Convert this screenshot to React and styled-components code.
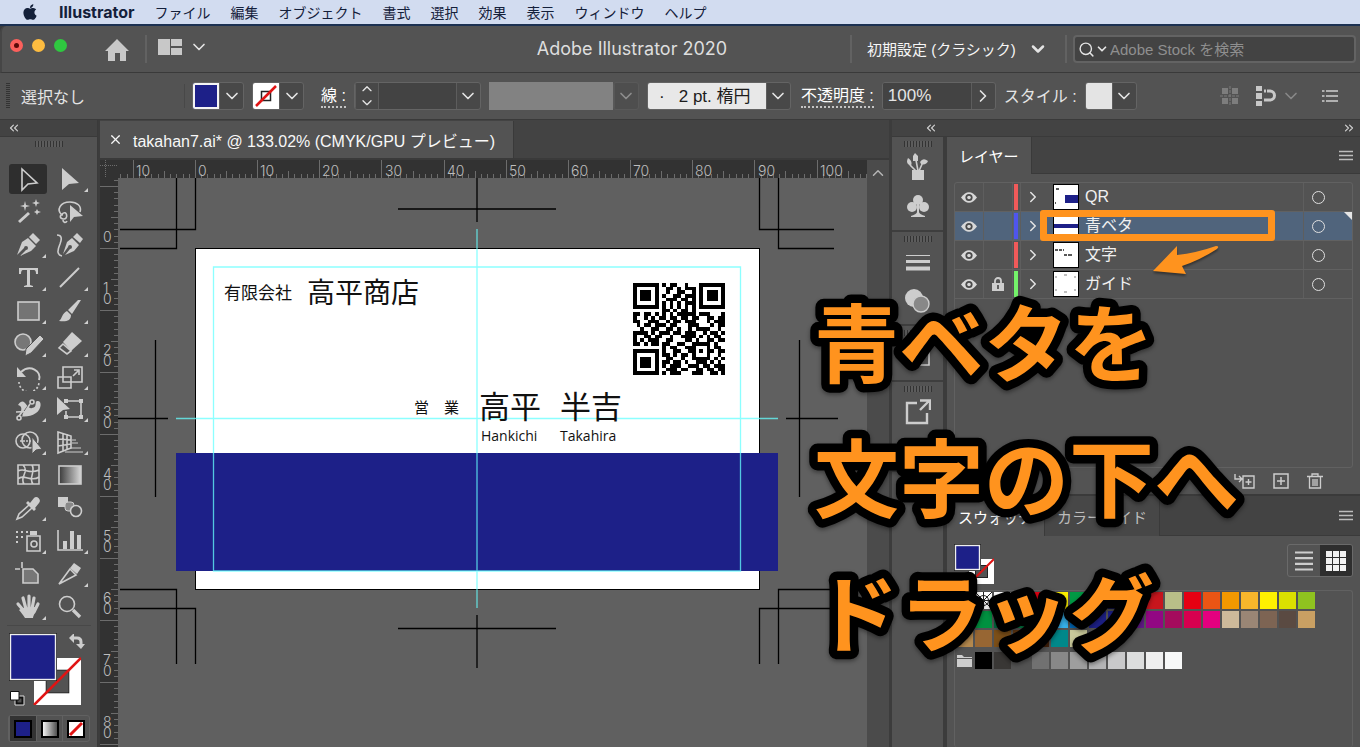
import { useState } from 'react';
import styled, { createGlobalStyle } from 'styled-components';
import {
    ChevronDown,
    ChevronUp,
    ChevronRight,
    ChevronsLeft,
    ChevronsRight,
    Search,
    X,
} from 'lucide-react';
import { FaApple } from 'react-icons/fa';

const GlobalStyle = createGlobalStyle`
    * { box-sizing: border-box; }
    body {
        margin: 0;
        background: #3c3c3c;
        color: #e4e4e4;
        font-family: "Liberation Sans", "Noto Sans CJK JP", sans-serif;
        font-size: 16px;
        overflow: hidden;
    }
    button, input, select {
        font: inherit;
        color: inherit;
        background: none;
        border: none;
        margin: 0;
        padding: 0;
        outline: none;
    }
    ul { list-style: none; margin: 0; padding: 0; }
    svg { display: block; flex: none; }
`;

const App_ = styled.div`
    height: 100vh;
    display: flex;
    flex-direction: column;
`;

/* ---------- mac menu bar ---------- */
const MenuBar = styled.nav`
    height: 26px;
    flex: none;
    display: flex;
    align-items: center;
    gap: 20px;
    padding-left: 21px;
    background: #d2dcf0;
    border-bottom: 2px solid #1c3152;
    color: #14203a;
`;
const MenuItem = styled.button`
    font-size: ${(p) => (p.$bold ? 16 : 14)}px;
    font-weight: ${(p) => (p.$bold ? 700 : 400)};
    font-family: ${(p) => (p.$bold ? 'Inter, sans-serif' : '"Noto Sans CJK JP", sans-serif')};
    line-height: 20px;
    white-space: nowrap;
`;

/* ---------- title bar ---------- */
const TitleBar = styled.header`
    height: 47px;
    flex: none;
    display: grid;
    grid-template-columns: 1fr auto 1fr;
    align-items: center;
    background: #535353;
    border-bottom: 1px solid #3a3a3a;
    border-left: 2px solid #464646;
    border-top-left-radius: 6px;
`;
const TitleSide = styled.div`
    display: flex;
    align-items: center;
    justify-content: ${(p) => p.$end ? 'flex-end' : 'flex-start'};
    padding: ${(p) => p.$end ? '0 4px 0 0' : '0 0 0 8px'};
`;
const Lights = styled.div`
    display: flex;
    gap: 9px;
    padding-bottom: 8px;
`;
const Light = styled.button`
    width: 13px;
    height: 13px;
    border-radius: 50%;
    background: ${(p) => p.$color};
    display: grid;
    place-items: center;
    &::after {
        content: '';
        width: 5px;
        height: 5px;
        border-radius: 50%;
        background: ${(p) => p.$dot || 'transparent'};
    }
`;
const HomeButton = styled.button`
    margin: 1px 16px 0 38px;
`;
const Rule = styled.span`
    width: 2px;
    height: 28px;
    flex: none;
    background: #626262;
`;
const LayoutButton = styled.button`
    display: flex;
    align-items: center;
    gap: 7px;
    margin: 0 0 4px 11px;
`;
const Title = styled.h1`
    margin: 0;
    padding-right: 98px;
    font-family: Inter, sans-serif;
    font-size: 18px;
    font-weight: 400;
    line-height: 24px;
    color: #dedede;
    white-space: nowrap;
`;
const Workspace = styled.label`
    display: flex;
    align-items: center;
    gap: 11px;
    margin: 0 17px 0 15px;
`;
const WorkspaceSelect = styled.select`
    appearance: none;
    font-size: 15px;
    width: 150px;
    color: #f6f6f6;
`;
const SearchBox = styled.label`
    display: flex;
    align-items: center;
    width: 283px;
    height: 28px;
    margin-left: 6px;
    padding-left: 3px;
    background: #434343;
    border: 2px solid #636363;
    border-radius: 4px;
    input {
        flex: 1;
        min-width: 0;
        margin-left: 1px;
        font-size: 15px;
    }
    input::placeholder { color: #8f8f8f; opacity: 1; }
`;

/* ---------- control bar ---------- */
const ControlBar = styled.div`
    height: 47px;
    flex: none;
    display: flex;
    align-items: center;
    padding: 0 22px 0 6px;
    background: #535353;
    border-bottom: 1px solid #3a3a3a;
`;
const SideGrip = styled.i`
    width: 4px;
    height: 26px;
    background: repeating-linear-gradient(#333 0 1px, #535353 1px 2px);
`;
const BarTitle = styled.span`
    width: 164px;
    margin-left: 11px;
    font-size: 16px;
    border-right: 1px solid #484848;
`;
const BarLabel = styled.label`
    margin: 0 8px 0 ${(p) => p.$space}px;
    line-height: 21px;
    font-size: 16px;
    white-space: nowrap;
    border-bottom: ${(p) => (p.$dotted ? '2px dotted #c4c4c4' : 'none')};
    color: ${(p) => (p.$dotted ? '#fff' : '#e4e4e4')};
`;
const Combo = styled.div`
    display: flex;
    height: 28px;
    margin-left: ${(p) => p.$space || 0}px;
    border: 1px solid #646464;
    border-radius: 3px;
    background: #484848;
    opacity: ${(p) => (p.$off ? 0.4 : 1)};
    overflow: hidden;
`;
const Drop = styled.button`
    width: 24px;
    display: grid;
    place-content: center;
    border-left: 1px solid #5d5d5d;
    border-right: ${(p) => (p.$first ? '1px solid #5d5d5d' : 'none')};
`;
const ComboInput = styled.input`
    width: ${(p) => p.$w}px;
    padding-left: 5px;
    background: #434343;
    font-size: 17px;
`;
const SwatchBox = styled.span`
    width: 26px;
    height: 26px;
    display: grid;
    background: ${(p) => p.$color};
    border: ${(p) => p.$edge || '0'} solid #f4f4f4;
`;
const ProfileBox = styled.span`
    width: 124px;
    height: 28px;
    margin-left: 8px;
    background: #828282;
`;
const BrushSelect = styled.select`
    appearance: none;
    width: 118px;
    padding-left: 11px;
    background: #e8e8e8;
    color: #1c1c1c;
    font-size: 17px;
`;
const BarEnd = styled.div`
    display: flex;
    align-items: center;
    margin-left: auto;
    gap: 16px;
`;
const SnapDrop = styled.button`
    margin-left: 5px;
    color: #888;
`;

/* ---------- main columns ---------- */
const Main = styled.main`
    position: relative;
    flex: 1;
    min-height: 0;
    display: flex;
    overflow: hidden;
`;
const Strip = styled.div`
    height: 17px;
    flex: none;
    display: flex;
    align-items: center;
    justify-content: space-between;
    padding: 0 4px 0 ${(p) => p.$pad}px;
    background: #434343;
    border-bottom: 1px solid #3a3a3a;
    color: #d0d0d0;
`;
const Toolbox = styled.aside`
    width: 98px;
    flex: none;
    display: flex;
    flex-direction: column;
    background: #535353;
    border-right: 1px solid #3a3a3a;
`;
const Grip = styled.i`
    width: 28px;
    height: 6px;
    flex: none;
    margin: 4px auto 0;
    background: repeating-linear-gradient(90deg, #333 0 1px, #5c5c5c 1px 3px);
`;
const ToolGrid = styled.div`
    flex: none;
    height: 460px;
    margin: 16px 7px 0;
    display: grid;
    grid-template: repeat(14, 1fr) / 42px 42px;
    place-items: center;
`;
const Tool = styled.button`
    position: relative;
    width: 38px;
    height: 30px;
    display: grid;
    place-items: center;
    border-radius: 3px;
    background: ${(p) => (p.$on ? '#2e2e2e' : 'transparent')};
    &::after {
        content: '';
        display: ${(p) => (p.$more ? 'block' : 'none')};
        position: absolute;
        right: 1px;
        bottom: 2px;
        border: 2px solid #cfcfcf;
        border-top-color: transparent;
        border-left-color: transparent;
    }
`;
const ToolRule = styled.hr`
    width: 84px;
    margin: 2px auto 7px;
    border: none;
    border-top: 1px solid #484848;
`;
const ProxyArea = styled.div`
    position: relative;
    margin-left: 9px;
    height: 73px;
    flex: none;
`;
const SwapIcon = styled.button`
    position: absolute;
    left: 60px;
    top: 1px;
`;
const DefaultIcon = styled.button`
    position: absolute;
    left: 0;
    bottom: 0;
`;
const Modes = styled.div`
    display: flex;
    margin: 9px 0 0 8px;
    width: 82px;
    border: 1px solid #616161;
    border-radius: 3px;
`;
const Mode = styled.button`
    flex: 1;
    height: 25px;
    display: grid;
    place-items: center;
    background: ${(p) => (p.$on ? '#333' : 'transparent')};
    border-left: 1px solid #616161;
`;

/* ---------- document ---------- */
const Document = styled.section`
    flex: 1;
    min-width: 0;
    margin: 0 3px 0 2px;
    display: flex;
    flex-direction: column;
    background: #434343;
`;
const TabBar = styled.div`
    height: 40px;
    flex: none;
    display: flex;
    padding-top: 1px;
    border-bottom: 2px solid #3a3a3a;
`;
const DocTab = styled.button`
    display: flex;
    align-items: center;
    gap: 10px;
    padding: 0 18px 0 8px;
    background: #535353;
    border-right: 1px solid #3a3a3a;
    font-size: 16px;
    color: #f8f8f8;
    white-space: nowrap;
`;
const Sheet = styled.div`
    flex: 1;
    min-height: 0;
    display: grid;
    grid-template: 18px 1fr / 18px 1fr 22px;
`;
const Ruler = styled.svg`
    width: 100%;
    height: 100%;
    background: #323232;
    overflow: hidden;
    text { fill: #bdbdbd; font-size: 14px; font-family: Inter, sans-serif; font-weight: 300; }
    path { stroke: #6c6c6c; fill: none; }
`;
const Canvas = styled.svg`
    width: 100%;
    height: 100%;
    background: #606060;
    overflow: hidden;
    text { font-family: "Noto Sans CJK JP", sans-serif; font-weight: 400; fill: #111; }
    .roman { font-family: "Open Sans", sans-serif; }
`;
const ScrollTrack = styled.div`
    grid-row: span 2;
    padding-top: 4px;
    display: flex;
    justify-content: center;
    align-items: flex-start;
    background: #4b4b4b;
`;

/* ---------- right dock ---------- */
const Dock = styled.aside`
    width: 468px;
    flex: none;
    display: flex;
    flex-direction: column;
`;
const DockBody = styled.div`
    flex: 1;
    min-height: 0;
    display: flex;
    gap: 4px;
`;
const IconColumn = styled.div`
    width: 51px;
    flex: none;
    display: flex;
    flex-direction: column;
    background: #535353;
`;
const IconGroup = styled.div`
    display: flex;
    flex-direction: column;
    align-items: center;
    padding-bottom: ${(p) => p.$end}px;
    border-bottom: 2px solid #3e3e3e;
`;
const DockButton = styled.button`
    width: 38px;
    height: 39px;
    display: grid;
    place-items: center;
`;
const Panels = styled.div`
    flex: 1;
    min-width: 0;
    display: flex;
    flex-direction: column;
    background: #535353;
`;
const PanelTabs = styled.div`
    height: ${(p) => (p.$tall ? 40 : 37)}px;
    flex: none;
    display: flex;
    align-items: stretch;
    background: #434343;
    box-shadow: inset 0 -1px #3a3a3a;
`;
const PanelTab = styled.button`
    padding: 0 ${(p) => p.$pad}px;
    font-size: 15px;
    background: ${(p) => (p.$on ? '#535353' : '#474747')};
    color: ${(p) => (p.$on ? '#fff' : '#bdbdbd')};
    border-right: 1px solid #3a3a3a;
    white-space: nowrap;
`;
const PanelMenu = styled.button`
    margin: 0 7px 0 auto;
`;
const LayerList = styled.ul`
    position: relative;
    height: 286px;
    flex: none;
    margin: 8px 7px 0;
    border: 1px solid #616161;
    border-radius: 3px;
`;
const LayerRow = styled.li`
    position: relative;
    height: 29px;
    display: flex;
    align-items: stretch;
    border-bottom: 1px solid #616161;
    background: ${(p) => (p.$on ? '#50647c' : 'transparent')};
    &::after {
        content: '';
        display: ${(p) => (p.$on ? 'block' : 'none')};
        position: absolute;
        right: 0;
        top: 0;
        border: 4px solid #e6e6e6;
        border-bottom-color: transparent;
        border-left-color: transparent;
    }
`;
const LayerCell = styled.button`
    width: ${(p) => p.$w}px;
    display: grid;
    place-items: center;
    border-right: ${(p) => (p.$plain ? 'none' : '1px solid #5e5e5e')};
`;
const ColorCell = styled.span`
    width: 8px;
    padding: 1px 2px 1px 1px;
    border-right: 1px solid #5e5e5e;
    &::before {
        content: '';
        display: block;
        height: 100%;
        background: ${(p) => p.$color};
    }
`;
const Thumb = styled.span`
    width: 26px;
    height: 26px;
    margin: 1px 6px 0 8px;
    background: #fff;
    border: 1px solid #000;
`;
const LayerName = styled.span`
    flex: 1;
    line-height: 28px;
    font-size: 16px;
    color: #f0f0f0;
`;
const TargetCell = styled.button`
    width: 49px;
    padding-left: 8px;
    border-left: 1px solid #5e5e5e;
    &::before {
        content: '';
        display: block;
        width: 11px;
        height: 11px;
        border: 1px solid #e0e0e0;
        border-radius: 50%;
    }
`;
const PanelFooter = styled.div`
    height: 28px;
    flex: none;
    display: flex;
    align-items: center;
    justify-content: flex-end;
    gap: 18px;
    padding-right: 37px;
    border-bottom: 2px solid #3a3a3a;
`;
const SwatchTop = styled.div`
    display: flex;
    justify-content: space-between;
    align-items: flex-start;
    padding: 8px 7px 0;
`;
const ViewToggle = styled.div`
    display: flex;
    border: 1px solid #6a6a6a;
    border-radius: 3px;
    overflow: hidden;
`;
const ViewButton = styled.button`
    width: 32px;
    height: 31px;
    display: grid;
    place-items: center;
    background: ${(p) => (p.$on ? '#2e2e2e' : 'transparent')};
`;
const SwatchList = styled.div`
    flex: 1;
    min-height: 0;
    margin: 6px 7px 0;
    padding: 1px;
    border: 1px solid #616161;
    border-bottom: none;
    border-radius: 3px;
`;
const SwatchRow = styled.div`
    display: flex;
    gap: 2px;
    margin-bottom: ${(p) => p.$gap || 2}px;
`;
const Swatch = styled.button`
    width: 17px;
    height: 17px;
    background: ${(p) => p.$color};
`;

/* ---------- annotations over the window ---------- */
const Highlight = styled.div`
    position: absolute;
    z-index: 1;
    left: 85px;
    right: 77px;
    top: 27px;
    height: 31px;
    border: 7px solid #ff931e;
    border-radius: 3px;
`;
const Arrow = styled.svg`
    position: absolute;
    z-index: 1;
    left: 197px;
    top: 61px;
`;
const Caption = styled.svg`
    position: absolute;
    top: 170px;
    right: 108px;
    width: 448px;
    height: 400px;
    overflow: visible;
    pointer-events: none;
    filter: drop-shadow(0 2px 2px rgba(0, 0, 0, 0.4));
    text {
        font-family: "Noto Sans CJK JP", sans-serif;
        font-size: 85px;
        font-weight: 700;
        fill: #ff931e;
        stroke: #000;
        stroke-width: 17px;
        stroke-linejoin: round;
        paint-order: stroke fill;
    }
`;

const C = '#cdcdcd';
const line = { fill: 'none', stroke: C, strokeWidth: 1.6 };

const tools = [
    { name: '選択', on: true, art: <path d="M-6-10V11L0 5 9 4z" {...line} /> },
    { name: 'ダイレクト選択', more: true, art: <path d="M-8-11V11L-1 5 9 4z" fill={C} /> },
    {
        name: '自動選択',
        art: (
            <>
                <path d="M-9 10L1 1" {...line} strokeWidth="3" />
                <path d="M-3-11l1 4 4 1-4 1-1 4-1-4-4-1 4-1zM8-13l1 3 3 1-3 1-1 3-1-3-3-1 3-1zM9-3l1 2 3 1-3 1-1 2-1-2-2-1 2-1z" fill={C} />
            </>
        ),
    },
    {
        name: 'なげなわ',
        art: (
            <>
                <path d="M-8 3C-14-2-10-10 0-10c7 0 12 4 10 10M-8 2c5-5 7 6 1 5-4-1-3-5 0-4M-7 8c0 3 3 3 4 1" {...line} />
                <path d="M0-7V10L4 5 13 4z" fill={C} />
            </>
        ),
    },
    {
        name: 'ペン',
        more: true,
        art: (
            <>
                <path d="M-11 10L-6-3 0-7 8 1 3 6-8 11-2 5a2 2 0 10-2-2L-10 9z" fill={C} />
                <path d="M1-8L5-12 12-5 8-1z" fill={C} />
            </>
        ),
    },
    {
        name: '曲線',
        art: (
            <>
                <path d="M-7 9L-3-3 2-7 9 0 4 6-5 10 0 4a2 2 0 10-2-2z" fill={C} />
                <path d="M3-8L7-12 13-6 10-2z" fill={C} />
                <path d="M-13-10c5 0 5 4 3 9-3 7-3 11 2 12" {...line} />
            </>
        ),
    },
    { name: '文字', more: true, art: <path d="M-9-10H10V-4H8Q8-8 6-8H2V7l3 1v1H-4V8l3-1V-8H-5Q-7-8-7-4H-9z" fill={C} /> },
    { name: '直線', more: true, art: <path d="M-10 9L9-10" {...line} strokeWidth="2" /> },
    { name: '長方形', more: true, art: <rect x="-10" y="-9" width="21" height="18" {...line} fill="#747474" /> },
    {
        name: 'ブラシ',
        more: true,
        art: <path d="M11-11L2 3-2-1 8-11zM-3 0L1 4C1 10-4 11-11 10-8 8-8 2-3 0z" fill={C} />,
    },
    {
        name: 'Shaper',
        more: true,
        art: (
            <>
                <circle cx="-5" cy="-2" r="8" {...line} fill="#777" />
                <path d="M-3 12l1-7L12-9l4 4L3 9z" fill={C} stroke="#535353" />
            </>
        ),
    },
    {
        name: '消しゴム',
        more: true,
        art: (
            <>
                <path d="M2-12L12-3 1 7-7-2z" fill={C} />
                <path d="M-7 0L1 7-3 10-11 4z" {...line} />
            </>
        ),
    },
    {
        name: '回転',
        more: true,
        art: (
            <>
                <path d="M-7-5C2-13 14-6 11 3" {...line} strokeWidth="2" />
                <path d="M-11-10V0H-2z" fill={C} />
                <path d="M-9 5A10 10 0 0011 5" {...line} strokeDasharray="2 2" />
            </>
        ),
    },
    {
        name: '拡大・縮小',
        more: true,
        art: (
            <>
                <path d="M-7-10H12V5H-7zM-12 0H1V11H-12z" {...line} />
                <path d="M3-1L8-6M4-7H9V-2" {...line} />
            </>
        ),
    },
    {
        name: '線幅',
        more: true,
        art: (
            <>
                <path d="M-10-4C-3-14-2 1 4-1 10-2 6-7 9-8c5-1 5 8-1 12C2 8-3 8-10 7-5 1-6-3-10-4z" fill={C} />
                <path d="M-9 10L3-7" stroke="#535353" strokeWidth="1.5" />
                <path d="M-12 3L6 2M-5 6L2-5" {...line} />
                <circle cx="-9" cy="9" r="2" {...line} />
                <circle cx="4" cy="-7" r="2" {...line} />
            </>
        ),
    },
    {
        name: '自由変形',
        more: true,
        art: (
            <>
                <path d="M-13-12V6L-7 1 0 0z" fill={C} />
                <path d="M-4-8H11V8H-4V2" {...line} />
                <path d="M-6-10h4v4h-4zM9-10h4v4h-4zM9 6h4v4h-4zM-6 6h4v4h-4z" fill={C} />
            </>
        ),
    },
    {
        name: 'シェイプ形成',
        more: true,
        art: (
            <>
                <circle cx="-5" cy="-1" r="7" {...line} />
                <circle cx="2" cy="-2" r="8" {...line} />
                <path d="M-8-1H4" {...line} strokeDasharray="2 1" />
                <path d="M4-5V12L8 8 14 7z" fill={C} stroke="#535353" />
            </>
        ),
    },
    {
        name: '遠近グリッド',
        more: true,
        art: (
            <>
                <path d="M-12-10L1-6V6L-12 11zM-7-9V9M-3-8V7M-12-3L1-2M-12 4L1 2" {...line} />
                <path d="M2-2H6M2 1H8M0 6H11M-5 10H13" {...line} strokeWidth="1" />
            </>
        ),
    },
    {
        name: 'メッシュ',
        art: (
            <path d="M-10-10H11V9H-10zM-10-4C-3-8 0 0 11-5M-10 4C-4-2 3 8 11 2M-5-10C2-3-9 2-4 9M4-10C8-3 0 3 5 9" {...line} />
        ),
    },
    { name: 'グラデーション', art: <rect x="-11" y="-9" width="22" height="18" stroke={C} strokeWidth="1.6" fill="url(#fade)" /> },
    {
        name: 'スポイト',
        more: true,
        art: (
            <>
                <path d="M2-5L6-10c3-3 8 2 5 5L7 0l1 1-2 2-8-8 2-2z" fill={C} />
                <path d="M1-3L-9 6-11 11-6 9 4 0" {...line} />
            </>
        ),
    },
    {
        name: 'ブレンド',
        art: (
            <>
                <path d="M-12-11H-2V-1H-12z" fill={C} />
                <rect x="-5" y="-6" width="9" height="9" rx="3" fill="#888" stroke={C} />
                <circle cx="6" cy="3" r="5.5" {...line} fill="#535353" />
            </>
        ),
    },
    {
        name: 'スプレー',
        more: true,
        art: (
            <>
                <path d="M-1-5H12V10H-1z" {...line} />
                <circle cx="6" cy="3" r="3" {...line} />
                <path d="M2-6V-10H9V-6zM-12-10h2v2h-2zM-7-10h2v2h-2zM-2-10h2v2h-2zM-12-5h2v2h-2zM-7-5h2v2h-2zM-12 0h2v2h-2z" fill={C} />
            </>
        ),
    },
    {
        name: 'グラフ',
        more: true,
        art: (
            <>
                <path d="M-12-11V9H13" {...line} />
                <path d="M-7 0h4v8h-4zM0-10h4V8H0zM7-6h4V8H7z" fill={C} />
            </>
        ),
    },
    {
        name: 'アートボード',
        art: (
            <>
                <path d="M-6-12V-6M-13-5H-8" {...line} />
                <path d="M-5-5H5L10 0V9H-5z" {...line} fill="#777" />
            </>
        ),
    },
    {
        name: 'スライス',
        more: true,
        art: (
            <>
                <path d="M-11 10L0-5 6 1z" {...line} />
                <path d="M0-6L4-11 11-6 7 0z" fill={C} />
            </>
        ),
    },
    {
        name: '手のひら',
        more: true,
        art: (
            <>
                <path d="M-10-3L-4 4M-5-9L-2 2M1-11V2M6-9L4 2M10-3L6 5" {...line} strokeWidth="3.2" strokeLinecap="round" />
                <path d="M-6 1L7 0 8 3C7 6 5 9 5 11H-3C-5 8-7 5-9 3z" fill={C} />
            </>
        ),
    },
    {
        name: 'ズーム',
        art: (
            <>
                <circle cx="-3" cy="-3" r="7.5" {...line} />
                <path d="M3 3L10 10" {...line} strokeWidth="3.4" />
            </>
        ),
    },
];

const layers = [
    { name: 'QR', color: '#f05a5a', art: <path d="M11 10H24V18H11z" fill="#1d2088" />, marks: 'M2 4h3M1 18h1' },
    { name: '青ベタ', color: '#4f55ee', art: <path d="M0 10H24V14H0z" fill="#1d2088" /> },
    { name: '文字', color: '#f05a5a', marks: 'M1 7h9M10 12h7M16 12h2' },
    { name: 'ガイド', color: '#74f26a', locked: true, marks: 'M2 4v2M21 4v2M2 17v2M21 17v2M10 3h4M10 20h4', thin: true },
];

const swatches = [
    ['#fff', '#fff', '#fff', '#1a1a1a', '#e60012', '#fff100', '#009944', '#00a0e9', '#1d2088', '#e4007f', '#c7161d', '#b9bf88', '#e60012', '#ea5514', '#f39800', '#f8b62b', '#fff100', '#dbe000', '#8fc31f'],
    ['#22ac38', '#009140', '#00693e', '#00894a', '#2ea7e0', '#36b0ea', '#0068b7', '#1d2088', '#1d2088', '#601986', '#920783', '#a40b5d', '#d7004f', '#e4007f', '#cdb99a', '#9a8675', '#7d6453', '#5a4a42', '#c9a063'],
    ['#b5894e', '#976633', '#7c4f18', '#603813', '#42210b', '#00888a', '#c9c99b'],
];
const grays = ['#000', '#393735', '#535353', '#717171', '#888', '#9e9e9e', '#b4b4b5', '#c9c9ca', '#dcdddd', '#efefef', '#f7f8f8'];

const qr = [
    '1111111010110010001111111',
    '1000001001101011101000001',
    '1011101001001100101011101',
    '1011101010011011101011101',
    '1011101001110110101011101',
    '1000001010101011101000001',
    '1111111010101010101111111',
    '0000000011010110100000000',
    '1101101010101111101110001',
    '1001010110110110110011011',
    '1100111001011011100010111',
    '0101101110110001110001011',
    '0010011001101001011110010',
    '1111010111011011100101101',
    '1001101100100111101010110',
    '1010111001100011010011011',
    '1101011011001100111110100',
    '0000000010110011100010110',
    '1111111010011001101011011',
    '1000001011010110100010010',
    '1011101001100100111110101',
    '1011101011011010011101010',
    '1011101010111001110110111',
    '1000001001110110011011011',
    '1111111010111000111001101',
];

function Svg({ w, h = w, box, children }) {
    return (
        <svg width={w} height={h} viewBox={box || `0 0 ${w} ${h}`} aria-hidden="true">
            {children}
        </svg>
    );
}

function Burger() {
    return (
        <Svg w={14} h={12}>
            <path d="M0 1.5H14M0 5.5H14M0 9.5H14" stroke="#bdbdbd" strokeWidth="1.3" />
        </Svg>
    );
}

function FillStroke({ size, step, back }) {
    const end = step + back;
    return (
        <Svg w={end}>
            <rect x={step} y={step} width={back} height={back} fill="#fff" />
            <rect x={step + back * 0.26} y={step + back * 0.26} width={back * 0.48} height={back * 0.48} fill="#535353" stroke="#222" />
            <path d={`M${step} ${end}L${end} ${step}`} stroke="#e01414" strokeWidth={size > 30 ? 2.5 : 2} />
            <rect x="0.5" y="0.5" width={size - 1} height={size - 1} fill="#1d2088" stroke="#222" />
            <rect x="1.5" y="1.5" width={size - 3} height={size - 3} fill="none" stroke="#eee" strokeWidth="1.4" />
        </Svg>
    );
}

function TopRuler() {
    let ticks = '';
    for (let i = -15; i < 300; i += 1) {
        const x = Math.round(77 + i * 6.215) + 0.5;
        const top = i % 10 === 0 ? 0 : i % 5 === 0 ? 11 : 14;
        ticks += `M${x} ${top}V18`;
    }
    return (
        <Ruler>
            <path d={ticks} />
            {[...Array(30)].map((_, i) => (
                <text key={i} x={18 + Math.round(i * 62.15)} y="16">{Math.abs(i - 1) * 10}</text>
            ))}
        </Ruler>
    );
}

function SideRuler() {
    let ticks = '';
    for (let i = -11; i < 200; i += 1) {
        const y = Math.round(70 + i * 6.2) + 0.5;
        const left = i % 10 === 0 ? 0 : i % 5 === 0 ? 11 : 14;
        ticks += `M${left} ${y}H18`;
    }
    return (
        <Ruler>
            <path d={ticks} />
            {[...Array(20)].map((_, i) => {
                const y = 64 + Math.round(i * 62);
                return String(i * 10).split('').reverse().map((d, n) => (
                    <text key={`${i}-${n}`} x="3" y={y - n * 11}>{d}</text>
                ));
            })}
        </Ruler>
    );
}

function Artwork() {
    let cells = '';
    qr.forEach((row, y) => {
        row.split('').forEach((bit, x) => {
            if (bit === '1') cells += `M${x} ${y}h1v1h-1z`;
        });
    });
    return (
        <Canvas role="img" aria-label="名刺">
            <rect x="77.5" y="70.5" width="564" height="341" fill="#fff" stroke="#000" />
            <path
                stroke="#000"
                strokeWidth="1.3"
                fill="none"
                d="M58.5 0V70.5H2M77.5 0V51.5H2M641.5 0V51.5H716M660.5 0V70.5H716
                   M58.5 486V411.5H2M77.5 486V430.5H2M641.5 486V430.5H716M660.5 486V411.5H716
                   M359 0V44M280 31H438M359 437V490M280 450.5H438
                   M37.5 162V319M0 240.5H50M681.5 162V319M668 240.5H720"
            />
            <rect x="58" y="275" width="602" height="118" fill="#1d2088" />
            <path d="M95.5 89H622.5V393H95.5zM359 51V430M58 240.5H660" fill="none" stroke="#6ff" strokeOpacity="0.75" strokeWidth="1.3" />
            <text x="106" y="121" fontSize="17">有限会社</text>
            <text x="189" y="125" fontSize="28">高平商店</text>
            <text x="296" y="235" fontSize="15">営　業</text>
            <text x="361" y="240" fontSize="31">高平</text>
            <text x="442" y="240" fontSize="31">半吉</text>
            <text className="roman" x="363" y="263" fontSize="14">Hankichi</text>
            <text className="roman" x="442" y="263" fontSize="14">Takahira</text>
            <svg x="515" y="105" width="92" height="92" viewBox="0 0 25 25">
                <path d={cells} fill="#000" shapeRendering="crispEdges" />
            </svg>
        </Canvas>
    );
}

export default function App() {
    const [active, setActive] = useState('青ベタ');
    return (
        <App_>
            <GlobalStyle />
            <svg width="0" height="0" aria-hidden="true">
                <linearGradient id="fade">
                    <stop offset="0" stopColor="#3a3a3a" />
                    <stop offset="1" stopColor="#d8d8d8" />
                </linearGradient>
                <linearGradient id="fadeLight">
                    <stop offset="0" stopColor="#fff" />
                    <stop offset="1" stopColor="#444" />
                </linearGradient>
            </svg>

            <MenuBar>
                <FaApple size={18} />
                <MenuItem $bold>Illustrator</MenuItem>
                {['ファイル', '編集', 'オブジェクト', '書式', '選択', '効果', '表示', 'ウィンドウ', 'ヘルプ'].map((m) => (
                    <MenuItem key={m}>{m}</MenuItem>
                ))}
            </MenuBar>

            <TitleBar>
                <TitleSide>
                    <Lights>
                        <Light $color="#fc605c" $dot="#5c0a08" aria-label="閉じる" />
                        <Light $color="#fdbc40" aria-label="しまう" />
                        <Light $color="#2fc840" aria-label="拡大" />
                    </Lights>
                    <HomeButton aria-label="ホーム">
                        <Svg w={24} h={22}>
                            <path d="M12 0L24 12H21V22H15V14H10V22H3V12H0z" fill="#c8c8c8" />
                        </Svg>
                    </HomeButton>
                    <Rule />
                    <LayoutButton aria-label="ドキュメントレイアウト">
                        <Svg w={24} h={16}>
                            <path d="M0 0H12V16H0zM13 0H24V7H13zM13 9H24V16H13z" fill="#c8c8c8" />
                        </Svg>
                        <ChevronDown size={20} />
                    </LayoutButton>
                </TitleSide>
                <Title>Adobe Illustrator 2020</Title>
                <TitleSide $end>
                    <Rule />
                    <Workspace>
                        <WorkspaceSelect aria-label="ワークスペース">
                            <option>初期設定 (クラシック)</option>
                        </WorkspaceSelect>
                        <ChevronDown size={20} strokeWidth={3} />
                    </Workspace>
                    <Rule />
                    <SearchBox>
                        <Search size={17} />
                        <ChevronDown size={14} strokeWidth={3} />
                        <input aria-label="検索" placeholder="Adobe Stock を検索" />
                    </SearchBox>
                </TitleSide>
            </TitleBar>

            <ControlBar>
                <SideGrip />
                <BarTitle>選択なし</BarTitle>
                <Combo $space={7}>
                    <SwatchBox $color="#1d2088" $edge="2px" />
                    <Drop aria-label="塗り"><ChevronDown size={20} /></Drop>
                </Combo>
                <Combo $space={8}>
                    <SwatchBox $color="#fff">
                        <Svg w={26}>
                            <rect x="8.5" y="8.5" width="9" height="9" fill="#fff" stroke="#222" strokeWidth="1.5" />
                            <path d="M3 23L23 3" stroke="#e01414" strokeWidth="2.5" />
                        </Svg>
                    </SwatchBox>
                    <Drop aria-label="線のカラー"><ChevronDown size={20} /></Drop>
                </Combo>
                <BarLabel $space={17} $dotted htmlFor="stroke">線 :</BarLabel>
                <Combo>
                    <Drop $first aria-label="線幅を増減">
                        <ChevronUp size={18} viewBox="0 5 24 18" height={12} />
                        <ChevronDown size={18} viewBox="0 2 24 18" height={12} />
                    </Drop>
                    <ComboInput id="stroke" $w={77} />
                    <Drop aria-label="線幅"><ChevronDown size={20} /></Drop>
                </Combo>
                <ProfileBox />
                <Combo $off>
                    <Drop aria-label="プロファイル" disabled><ChevronDown size={20} /></Drop>
                </Combo>
                <Combo $space={8}>
                    <BrushSelect aria-label="ブラシ定義">
                        <option>·&nbsp;&nbsp; 2 pt. 楕円</option>
                    </BrushSelect>
                    <Drop aria-label="ブラシ"><ChevronDown size={20} /></Drop>
                </Combo>
                <BarLabel $space={10} $dotted htmlFor="opacity">不透明度 :</BarLabel>
                <Combo>
                    <ComboInput id="opacity" $w={88} defaultValue="100%" />
                    <Drop aria-label="不透明度"><ChevronRight size={20} /></Drop>
                </Combo>
                <BarLabel $space={8}>スタイル :</BarLabel>
                <Combo>
                    <SwatchBox $color="#e4e4e4" />
                    <Drop aria-label="グラフィックスタイル"><ChevronDown size={20} /></Drop>
                </Combo>
                <BarEnd>
                    <Svg w={20}>
                        <path d="M2 2h6v6H2zM12 2h6v6h-6zM2 12h6v6H2zM12 12h6v6h-6z" fill="#7d7d7d" />
                        <path d="M10 0V20M0 10H20" stroke="#7d7d7d" strokeDasharray="3 1" />
                    </Svg>
                    <Svg w={20}>
                        <path d="M0 0h6v5H0zM0 7h6v6H0zM0 15h6v5H0z" fill="#c8c8c8" />
                        <path d="M8 5H14a4 4 0 010 9H8" fill="none" stroke="#c8c8c8" strokeWidth="3" strokeDasharray="2 1 30" />
                    </Svg>
                </BarEnd>
                <SnapDrop aria-label="整列オプション"><ChevronDown size={20} /></SnapDrop>
                <Svg w={37} h={12}>
                    <path d="M21 1H23.5M21 6H23.5M21 11H23.5M25 1H37M25 6H37M25 11H37" stroke="#cfcfcf" strokeWidth="1.6" />
                </Svg>
            </ControlBar>

            <Main>
                <Toolbox>
                    <Strip $pad={7}><ChevronsLeft size={14} /></Strip>
                    <Grip />
                    <ToolGrid>
                        {tools.map((t) => (
                            <Tool key={t.name} $on={t.on} $more={t.more} aria-label={t.name}>
                                <Svg w={32} h={28} box="-16 -14 32 28">{t.art}</Svg>
                            </Tool>
                        ))}
                    </ToolGrid>
                    <ToolRule />
                    <ProxyArea>
                        <FillStroke size={48} step={25} back={47} />
                        <SwapIcon aria-label="塗りと線を入れ替え">
                            <Svg w={16}>
                                <path d="M4 4H8Q12 4 12 8V11" fill="none" stroke={C} strokeWidth="3" />
                                <path d="M5-1V9L0 4zM7 10H16L12 15z" fill={C} />
                            </Svg>
                        </SwapIcon>
                        <DefaultIcon aria-label="初期設定の塗りと線">
                            <Svg w={16}>
                                <path d="M6 6H15V15H6z" fill="#111" stroke="#ddd" />
                                <path d="M8.5 8.5H12.5V12.5H8.5z" fill="#535353" />
                                <path d="M1.5 1.5H10V10H1.5z" fill="#fff" stroke="#111" />
                            </Svg>
                        </DefaultIcon>
                    </ProxyArea>
                    <Modes>
                        <Mode $on aria-label="カラー">
                            <Svg w={18}><path d="M1 1H17V17H1z" fill="#1d2088" stroke="#000" strokeWidth="2" /></Svg>
                        </Mode>
                        <Mode aria-label="グラデーション">
                            <Svg w={18}><path d="M1 1H17V17H1z" fill="url(#fadeLight)" stroke="#000" strokeWidth="2" /></Svg>
                        </Mode>
                        <Mode aria-label="なし">
                            <Svg w={18}>
                                <path d="M1 1H17V17H1z" fill="#fff" stroke="#000" strokeWidth="2" />
                                <path d="M3 15L15 3" stroke="#e01414" strokeWidth="3" />
                            </Svg>
                        </Mode>
                    </Modes>
                </Toolbox>

                <Document>
                    <TabBar>
                        <DocTab>
                            <X size={15} />
                            takahan7.ai* @ 133.02% (CMYK/GPU プレビュー)
                        </DocTab>
                    </TabBar>
                    <Sheet>
                        <Ruler><path d="M5.5 0V18M0 5.5H18" strokeDasharray="1 1" /></Ruler>
                        <TopRuler />
                        <ScrollTrack><ChevronUp size={18} color="#b5b5b5" /></ScrollTrack>
                        <SideRuler />
                        <Artwork />
                    </Sheet>
                </Document>

                <Dock>
                    <Strip $pad={32}>
                        <ChevronsLeft size={14} />
                        <ChevronsRight size={14} />
                    </Strip>
                    <DockBody>
                        <IconColumn>
                            <IconGroup $end={5}>
                                <Grip />
                                <DockButton aria-label="ブラシ">
                                    <Svg w={24} h={28}>
                                        <path d="M6 17H18V27H6zM2 5C6 8 6 10 5 13 1 11 0 9 2 5zM7 3L9 0 12 3V8H7zM14 9Q17 4 22 8C21 11 18 12 15 11z" fill={C} />
                                        <path d="M4 12L10 18M10 7L12 18M17 9L13 18" stroke={C} strokeWidth="1.6" />
                                    </Svg>
                                </DockButton>
                                <DockButton aria-label="シンボル">
                                    <Svg w={24} h={24}>
                                        <circle cx="12" cy="6" r="5" fill={C} />
                                        <circle cx="6" cy="13" r="5" fill={C} />
                                        <circle cx="18" cy="13" r="5" fill={C} />
                                        <path d="M11 9H13V18Q13 20 19 22V23H5V22Q11 20 11 18z" fill={C} />
                                    </Svg>
                                </DockButton>
                            </IconGroup>
                            <IconGroup $end={4}>
                                <Grip />
                                <DockButton aria-label="線">
                                    <Svg w={24} h={18}>
                                        <path d="M0 2.5H24" stroke={C} />
                                        <path d="M0 8.5H24" stroke={C} strokeWidth="3" />
                                        <path d="M0 15.5H24" stroke={C} strokeWidth="4" />
                                    </Svg>
                                </DockButton>
                                <DockButton aria-label="透明">
                                    <Svg w={26} h={24}>
                                        <circle cx="9" cy="9" r="9" fill={C} />
                                        <circle cx="16" cy="15" r="8" fill="#888" stroke={C} strokeWidth="1.4" />
                                    </Svg>
                                </DockButton>
                            </IconGroup>
                            <IconGroup $end={5}>
                                <Grip />
                                <DockButton aria-label="アピアランス">
                                    <Svg w={24}>
                                        <path d="M1 1H23V21H8V23H4" {...line} />
                                    </Svg>
                                </DockButton>
                            </IconGroup>
                            <IconGroup $end={0}>
                                <Grip />
                                <DockButton aria-label="アセットの書き出し">
                                    <Svg w={26}>
                                        <path d="M12 4H2V24H22V14" {...line} strokeWidth="2.4" />
                                        <path d="M15 1.5H25V11M24 2L15 11" {...line} strokeWidth="2.4" />
                                    </Svg>
                                </DockButton>
                                <DockButton aria-label="アートボード">
                                    <Svg w={24}><path d="M3 2H21V20H3z" {...line} /></Svg>
                                </DockButton>
                            </IconGroup>
                        </IconColumn>

                        <Panels>
                            <PanelTabs>
                                <PanelTab $on $pad={12}>レイヤー</PanelTab>
                                <PanelMenu aria-label="パネルメニュー"><Burger /></PanelMenu>
                            </PanelTabs>
                            <LayerList>
                                {layers.map((l) => (
                                    <LayerRow key={l.name} $on={l.name === active} onClick={() => setActive(l.name)}>
                                        <LayerCell $w={29} aria-label="表示">
                                            <Svg w={16} h={11}>
                                                <path d="M0 5.5Q8-5 16 5.5 8 16 0 5.5z" fill="#d8d8d8" />
                                                <circle cx="8" cy="5.5" r="3.6" fill="#4a4a4a" />
                                                <circle cx="8" cy="5.5" r="1.8" fill="#d8d8d8" />
                                            </Svg>
                                        </LayerCell>
                                        <LayerCell $w={29} aria-label="ロック">
                                            {l.locked && (
                                                <Svg w={12} h={14}>
                                                    <path d="M3 6V4a3 3 0 016 0V6" fill="none" stroke={C} strokeWidth="1.8" />
                                                    <path d="M0 6H12V14H0z" fill={C} />
                                                    <path d="M6 8V12" stroke="#444" strokeWidth="1.6" />
                                                </Svg>
                                            )}
                                        </LayerCell>
                                        <ColorCell $color={l.color} />
                                        <LayerCell $w={24} $plain aria-label="展開"><ChevronRight size={18} /></LayerCell>
                                        <Thumb>
                                            <Svg w={24}>
                                                {l.art}
                                                <path d={l.marks || ''} stroke={l.thin ? '#aaa' : '#222'} strokeWidth="1.5" strokeDasharray="3 1" />
                                            </Svg>
                                        </Thumb>
                                        <LayerName>{l.name}</LayerName>
                                        <TargetCell aria-label="ターゲット" />
                                    </LayerRow>
                                ))}
                                <Highlight />
                                <Arrow width="70" height="34">
                                    <path
                                        d="M1 27L25 2V11Q44 9 64 2 68 2 65 5 48 16 30 22L34 30z"
                                        fill="#ff931e"
                                        filter="drop-shadow(0 2px 1px rgba(0, 0, 0, 0.4))"
                                    />
                                </Arrow>
                            </LayerList>
                            <PanelFooter>
                                <button aria-label="新規サブレイヤー">
                                    <Svg w={21} h={16}>
                                        <path d="M1 1V6H7M5 3L8 6 5 9M9 3H20V15H9zM14.5 6V12M11.5 9H17.5" fill="none" stroke={C} strokeWidth="1.4" />
                                    </Svg>
                                </button>
                                <button aria-label="新規レイヤー">
                                    <Svg w={16}>
                                        <path d="M1 1H15V15H1zM8 4V12M4 8H12" fill="none" stroke={C} strokeWidth="1.5" />
                                    </Svg>
                                </button>
                                <button aria-label="削除">
                                    <Svg w={16}>
                                        <path d="M0 3.5H16M5 3V1H11V3M2.5 4V15H13.5V4M6 6V13M8 6V13M10 6V13" fill="none" stroke={C} strokeWidth="1.3" />
                                    </Svg>
                                </button>
                            </PanelFooter>

                            <PanelTabs $tall>
                                <PanelTab $on $pad={11}>スウォッチ</PanelTab>
                                <PanelTab $pad={12}>カラーガイド</PanelTab>
                                <PanelMenu aria-label="パネルメニュー"><Burger /></PanelMenu>
                            </PanelTabs>
                            <SwatchTop>
                                <FillStroke size={27} step={15} back={25} />
                                <ViewToggle>
                                    <ViewButton aria-label="リスト表示">
                                        <Svg w={18} h={20}>
                                            <path d="M0 1.5H18M0 7.2H18M0 12.9H18M0 18.5H18" stroke={C} strokeWidth="2.2" />
                                        </Svg>
                                    </ViewButton>
                                    <ViewButton $on aria-label="サムネール表示">
                                        <Svg w={20}>
                                            <path d="M0 0h6v6H0zM7 0h6v6H7zM14 0h6v6h-6zM0 7h6v6H0zM7 7h6v6H7zM14 7h6v6h-6zM0 14h6v6H0zM7 14h6v6H7zM14 14h6v6h-6z" fill="#f2f2f2" />
                                        </Svg>
                                    </ViewButton>
                                </ViewToggle>
                            </SwatchTop>
                            <SwatchList>
                                {swatches.map((row, i) => (
                                    <SwatchRow key={i} $gap={i === 2 ? 5 : 2}>
                                        {row.map((c, n) => (
                                            <Swatch key={n} $color={c} aria-label={c}>
                                                {i === 0 && n === 1 && (
                                                    <Svg w={17}>
                                                        <circle cx="8.5" cy="8.5" r="5" fill="none" stroke="#222" />
                                                        <path d="M0 0L17 17M17 0L0 17M8.5 0V17M0 8.5H17" stroke="#222" />
                                                    </Svg>
                                                )}
                                            </Swatch>
                                        ))}
                                    </SwatchRow>
                                ))}
                                <SwatchRow>
                                    <Svg w={17}>
                                        <path d="M1 3H6L8 5H16V15H1z" fill={C} />
                                        <path d="M1 6.5H16" stroke="#535353" />
                                    </Svg>
                                    {grays.map((c) => <Swatch key={c} $color={c} aria-label={c} />)}
                                </SwatchRow>
                            </SwatchList>
                        </Panels>
                    </DockBody>
                </Dock>

                <Caption>
                    <text x="10" y="86">青ベタを</text>
                    <text x="10" y="221">文字の下へ</text>
                    <text x="10" y="356">ドラッグ</text>
                </Caption>
            </Main>
        </App_>
    );
}
